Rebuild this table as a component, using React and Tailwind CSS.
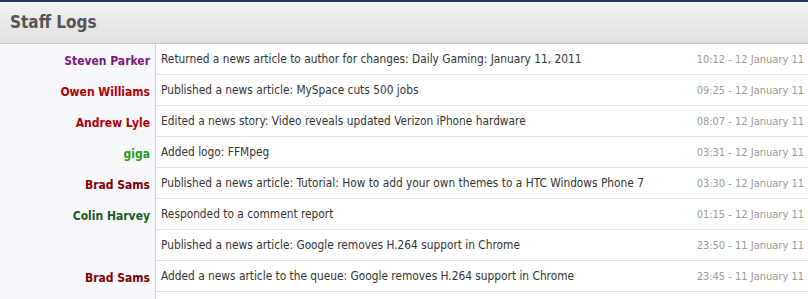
import React from "react";

const rows = [
  { name: "Steven Parker", color: "text-[#7b1a7b]", text: "Returned a news article to author for changes: Daily Gaming: January 11, 2011", time: "10:12 - 12 January 11" },
  { name: "Owen Williams", color: "text-[#b00000]", text: "Published a news article: MySpace cuts 500 jobs", time: "09:25 - 12 January 11" },
  { name: "Andrew Lyle", color: "text-[#b00000]", text: "Edited a news story: Video reveals updated Verizon iPhone hardware", time: "08:07 - 12 January 11" },
  { name: "giga", color: "text-[#1f9a1f]", text: "Added logo: FFMpeg", time: "03:31 - 12 January 11" },
  { name: "Brad Sams", color: "text-[#800000]", text: "Published a news article: Tutorial: How to add your own themes to a HTC Windows Phone 7", time: "03:30 - 12 January 11" },
  { name: "Colin Harvey", color: "text-[#1e5a1e]", text: "Responded to a comment report", time: "01:15 - 12 January 11" },
  { name: "", color: "", text: "Published a news article: Google removes H.264 support in Chrome", time: "23:50 - 11 January 11" },
  { name: "Brad Sams", color: "text-[#800000]", text: "Added a news article to the queue: Google removes H.264 support in Chrome", time: "23:45 - 11 January 11" },
];

export default function App() {
  return (
    <div className="w-[808px] h-[299px] overflow-hidden bg-white font-['DejaVu_Sans_Condensed','Liberation_Sans',sans-serif]">
      <div className="h-[2px] bg-[#1d3a5c]" />
      <div className="h-[42px] flex items-center pl-[10px] bg-gradient-to-b from-[#f2f2f2] to-[#e0e0e0] border-b border-[#c8c8c8]">
        <span className="text-[17px] font-bold text-[#555555]">Staff Logs</span>
      </div>
      <div className="flex">
        <div className="w-[156px] shrink-0 bg-[#f6f8fb] border-r border-[#cfd3d8]">
          {rows.map((r, i) => (
            <div key={i} className={`h-[31px] flex items-center justify-end pr-[5px] pt-[2px] text-[12px] font-bold ${r.color}`}>
              {r.name}
            </div>
          ))}
          <div className="h-[40px]" />
        </div>
        <div className="flex-1 min-w-0">
          {rows.map((r, i) => (
            <div key={i} className="h-[31px] flex items-center justify-between border-b border-[#e2e2e2] pl-[5px] pt-[2px]">
              <span className="text-[#333333] whitespace-nowrap text-[11.8px]">{r.text}</span>
              <span className="text-[#999999] whitespace-nowrap pr-[4px] text-[11px]">{r.time}</span>
            </div>
          ))}
        </div>
      </div>
    </div>
  );
}
